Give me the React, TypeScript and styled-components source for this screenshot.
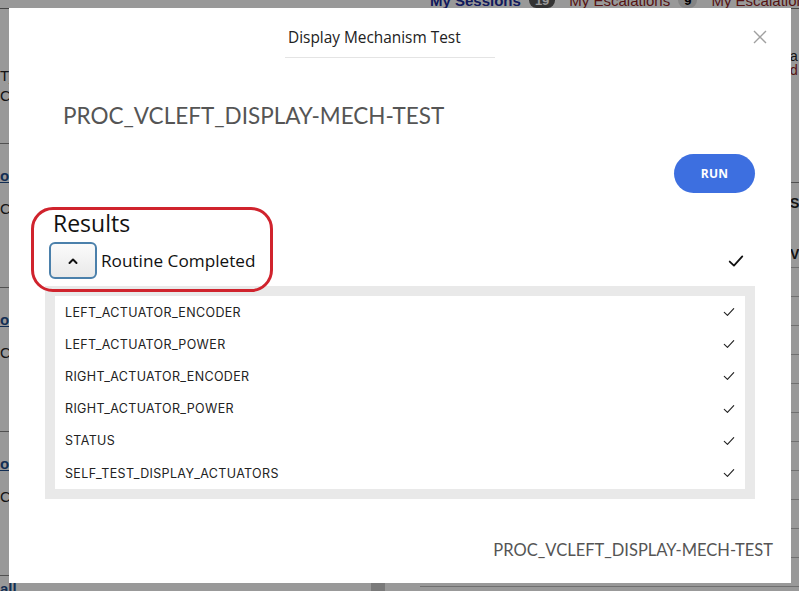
import React from "react";
import styled, { createGlobalStyle } from "styled-components";

const GlobalStyle = createGlobalStyle`
  html, body {
    margin: 0;
    padding: 0;
  }
  body {
    width: 799px;
    height: 591px;
    overflow: hidden;
    font-family: "Open Sans", "Liberation Sans", sans-serif;
  }
`;

const Screen = styled.div`
  position: relative;
  width: 799px;
  height: 591px;
  overflow: hidden;
  background: #ffffff;
`;

/* ---------- the page behind the dialog ---------- */

const BackPage = styled.div`
  display: flex;
  flex-direction: column;
  height: 100%;
  font-family: "Liberation Sans", Arial, sans-serif;
  color: #222;
`;

const TabBar = styled.div`
  display: flex;
  align-items: center;
  gap: 14px;
  height: 16px;
  margin-top: -8px;
  padding-left: 430px;
  border-bottom: 1px solid #777;
  font-size: 15px;
  white-space: nowrap;
`;

const Tab = styled.span<{ $active?: boolean }>`
  display: flex;
  align-items: center;
  gap: 8px;
  flex-shrink: 0;
  font-weight: ${({ $active }) => ($active ? 700 : 400)};
  color: ${({ $active }) => ($active ? "#1b2a9a" : "#8e1d1d")};
`;

const TabBadge = styled.span<{ $dark?: boolean }>`
  padding: 0 6px;
  border-radius: 8px;
  font-size: 13px;
  font-weight: 700;
  background: ${({ $dark }) => ($dark ? "#555" : "#ddd")};
  color: ${({ $dark }) => ($dark ? "#fff" : "#000")};
`;

const BackBody = styled.div`
  flex: 1;
  display: grid;
  grid-template-columns: 385px 1fr;
  gap: 35px;
`;

const LeftColumn = styled.div`
  display: flex;
  flex-direction: column;
  border-right: 14px solid #ccc;
`;

const LeftIntro = styled.div`
  height: 134px;
  padding-top: 57px;
  box-sizing: border-box;
  font-size: 15px;
  line-height: 20px;
`;

const LeftCard = styled.div<{ $compact?: boolean }>`
  height: 144px;
  padding-top: ${({ $compact }) => ($compact ? "4px" : "23px")};
  box-sizing: border-box;
  border-top: 1px solid #888;
  display: flex;
  flex-direction: column;
  gap: 16px;
  font-size: 15px;
`;

const CardLink = styled.a`
  font-weight: 700;
  color: #1f4e8c;
  text-decoration: underline;
`;

const RightColumn = styled.div`
  display: flex;
  flex-direction: column;
  padding-top: 40px;
  font-size: 14px;
`;

const NoteLine = styled.div<{ $red?: boolean }>`
  line-height: 14px;
  padding-left: 370px;
  color: ${({ $red }) => ($red ? "#8e1d1d" : "#222")};
`;

const TableHead = styled.div`
  margin-top: 105px;
  border-top: 1px solid #888;
  padding: 12px 0 0 370px;
  height: 85px;
  box-sizing: border-box;
  display: flex;
  flex-direction: column;
  gap: 35px;
  line-height: 16px;
  font-weight: 700;
`;

const TableRow = styled.div`
  display: grid;
  grid-template-columns: 50px 143px 124px 1fr;
  height: 28px;
  align-items: center;
  border-top: 1px solid #bbb;
`;

const Cell = styled.span<{ $link?: boolean }>`
  color: ${({ $link }) => ($link ? "#2233aa" : "#222")};
  white-space: nowrap;
`;

/* ---------- dialog ---------- */

const Overlay = styled.div`
  position: absolute;
  inset: 0;
  background: rgba(0, 0, 0, 0.4);
  padding: 8px 8px 8px 9px;
  box-sizing: border-box;
`;

const Modal = styled.div`
  position: relative;
  width: 782px;
  height: 575px;
  background: #ffffff;
  padding: 0 36px;
  box-sizing: border-box;
  display: flex;
  flex-direction: column;
`;

const Header = styled.div`
  display: flex;
  align-items: flex-start;
`;

const DialogTitle = styled.div`
  margin-left: 240px;
  width: 210px;
  padding: 20px 0 9px 3px;
  box-sizing: border-box;
  border-bottom: 1px solid #e4e4e4;
  font-size: 15.4px;
  line-height: 20px;
  color: #222;
`;

const CloseButton = styled.button`
  margin: 19px -15px 0 auto;
  width: 20px;
  height: 20px;
  padding: 0;
  border: none;
  background: none;
  color: #a0a0a0;
  display: flex;
  align-items: center;
  justify-content: center;
`;

const ProcTitle = styled.div<{ $small?: boolean }>`
  font-family: "Lato", "Open Sans", sans-serif;
  color: #555;
  white-space: nowrap;
  font-size: ${({ $small }) => ($small ? "16.5px" : "22.5px")};
  line-height: ${({ $small }) => ($small ? "22px" : "30px")};
`;

const TopProc = styled(ProcTitle)`
  margin-top: 43px;
  padding-left: 18px;
`;

const FooterProc = styled(ProcTitle)`
  margin: 40px -18px 0 0;
  text-align: right;
`;

const RunRow = styled.div`
  display: flex;
  justify-content: flex-end;
  margin-top: 23px;
`;

const RunButton = styled.button`
  width: 81px;
  height: 39px;
  border: none;
  border-radius: 20px;
  background: #3d6fe0;
  color: #fff;
  font-family: "Open Sans", sans-serif;
  font-weight: 700;
  font-size: 12px;
  letter-spacing: 0.3px;
`;

const ResultsHeading = styled.div`
  margin-top: 17px;
  padding-left: 8px;
  font-family: "Open Sans", sans-serif;
  font-size: 23px;
  line-height: 26px;
  color: #111;
`;

const RoutineRow = styled.div`
  display: flex;
  align-items: center;
  margin-top: 6px;
  padding-left: 4px;
`;

const ToggleButton = styled.button`
  width: 48px;
  height: 37px;
  border: 2px solid #4b80ab;
  border-radius: 6px;
  background: linear-gradient(#fbfbfb, #e9e9e9);
  display: flex;
  align-items: center;
  justify-content: center;
  color: #111;
  padding: 0;
`;

const RoutineLabel = styled.span`
  margin-left: 4px;
  font-family: "Open Sans", sans-serif;
  font-size: 17.2px;
  color: #111;
`;

const HeaderCheck = styled.span`
  margin: 0 11px 0 auto;
  display: flex;
  color: #111;
`;

const Panel = styled.div`
  margin-top: 7px;
  background: #e9e9e9;
  padding: 10px;
`;

const PanelInner = styled.div`
  background: #fff;
  display: flex;
  flex-direction: column;
`;

const StepRow = styled.div`
  height: 32.2px;
  padding: 0 10px;
  display: flex;
  align-items: center;
  justify-content: space-between;
  font-family: "Inter", "Open Sans", sans-serif;
  font-size: 12.5px;
  letter-spacing: 0.35px;
  color: #222;
`;

const StepCheck = styled.span`
  display: flex;
  color: #222;
`;

const Annotation = styled.div`
  position: absolute;
  left: 22px;
  top: 199px;
  width: 242px;
  height: 85px;
  box-sizing: border-box;
  border: 3.5px solid #d0232d;
  border-radius: 22px;
  pointer-events: none;
`;

const Check = ({ size, weight }: { size: number; weight: number }) => (
  <svg width={size} height={size} viewBox="0 0 14 14" fill="none">
    <polyline
      points="1.5,7.5 5.2,11 12.5,3"
      stroke="currentColor"
      strokeWidth={weight}
      strokeLinecap="round"
      strokeLinejoin="round"
    />
  </svg>
);

const steps = [
  "LEFT_ACTUATOR_ENCODER",
  "LEFT_ACTUATOR_POWER",
  "RIGHT_ACTUATOR_ENCODER",
  "RIGHT_ACTUATOR_POWER",
  "STATUS",
  "SELF_TEST_DISPLAY_ACTUATORS",
];

const tableRows = [
  ["14121881", "Resolved", "5XJ3"],
  ["14121902", "Resolved", "5XJ3"],
  ["14121917", "Resolved", "5XJA1"],
  ["14121950", "Resolved", "5XJ26"],
  ["14121988", "Resolved", "5XJA1"],
  ["14122013", "Resolved", "5XJ5"],
  ["14122104", "Resolved", "5XJA2"],
  ["14122231", "Resolved", "5XJ2"],
  ["14122307", "Resolved", "5XJE2"],
  ["14122399", "Resolved", "5XJ8"],
  ["14122455", "Resolved", "5XJC"],
  ["14122500", "Unresolved", "5XJ3F1FA7"],
];

export default function App() {
  return (
    <Screen>
      <GlobalStyle />
      <BackPage>
        <TabBar>
          <Tab $active>
            My Sessions <TabBadge $dark>19</TabBadge>
          </Tab>
          <Tab>
            My Escalations <TabBadge>9</TabBadge>
          </Tab>
          <Tab>My Escalations</Tab>
        </TabBar>
        <BackBody>
          <LeftColumn>
            <LeftIntro>
              <div>T_PROC</div>
              <div>Completed</div>
            </LeftIntro>
            {[0, 1, 2].map((i) => (
              <LeftCard key={i}>
                <CardLink>open</CardLink>
                <span>Completed</span>
              </LeftCard>
            ))}
            <LeftCard $compact>
              <CardLink>all</CardLink>
            </LeftCard>
          </LeftColumn>
          <RightColumn>
            <NoteLine>a</NoteLine>
            <NoteLine $red>d</NoteLine>
            <TableHead>
              <span>S</span>
              <span>VIN</span>
            </TableHead>
            {tableRows.map(([id, status, vin]) => (
              <TableRow key={id}>
                <span />
                <Cell $link>{id}</Cell>
                <Cell>{status}</Cell>
                <Cell>{vin}</Cell>
              </TableRow>
            ))}
          </RightColumn>
        </BackBody>
      </BackPage>

      <Overlay>
        <Modal>
          <Header>
            <DialogTitle>Display Mechanism Test</DialogTitle>
            <CloseButton aria-label="Close">
              <svg width="14" height="14" viewBox="0 0 14 14">
                <path
                  d="M1 1 L13 13 M13 1 L1 13"
                  stroke="currentColor"
                  strokeWidth="1.4"
                />
              </svg>
            </CloseButton>
          </Header>

          <TopProc>PROC_VCLEFT_DISPLAY-MECH-TEST</TopProc>

          <RunRow>
            <RunButton>RUN</RunButton>
          </RunRow>

          <ResultsHeading>Results</ResultsHeading>
          <RoutineRow>
            <ToggleButton aria-label="Collapse">
              <svg width="10" height="8" viewBox="0 0 10 8" fill="none">
                <path
                  d="M1.5 6 L5 2.5 L8.5 6"
                  stroke="currentColor"
                  strokeWidth="2"
                  strokeLinecap="round"
                  strokeLinejoin="round"
                />
              </svg>
            </ToggleButton>
            <RoutineLabel>Routine Completed</RoutineLabel>
            <HeaderCheck>
              <Check size={16} weight={1.6} />
            </HeaderCheck>
          </RoutineRow>

          <Panel>
            <PanelInner>
              {steps.map((s) => (
                <StepRow key={s}>
                  {s}
                  <StepCheck>
                    <Check size={12} weight={1.3} />
                  </StepCheck>
                </StepRow>
              ))}
            </PanelInner>
          </Panel>

          <FooterProc $small>PROC_VCLEFT_DISPLAY-MECH-TEST</FooterProc>

          <Annotation />
        </Modal>
      </Overlay>
    </Screen>
  );
}
